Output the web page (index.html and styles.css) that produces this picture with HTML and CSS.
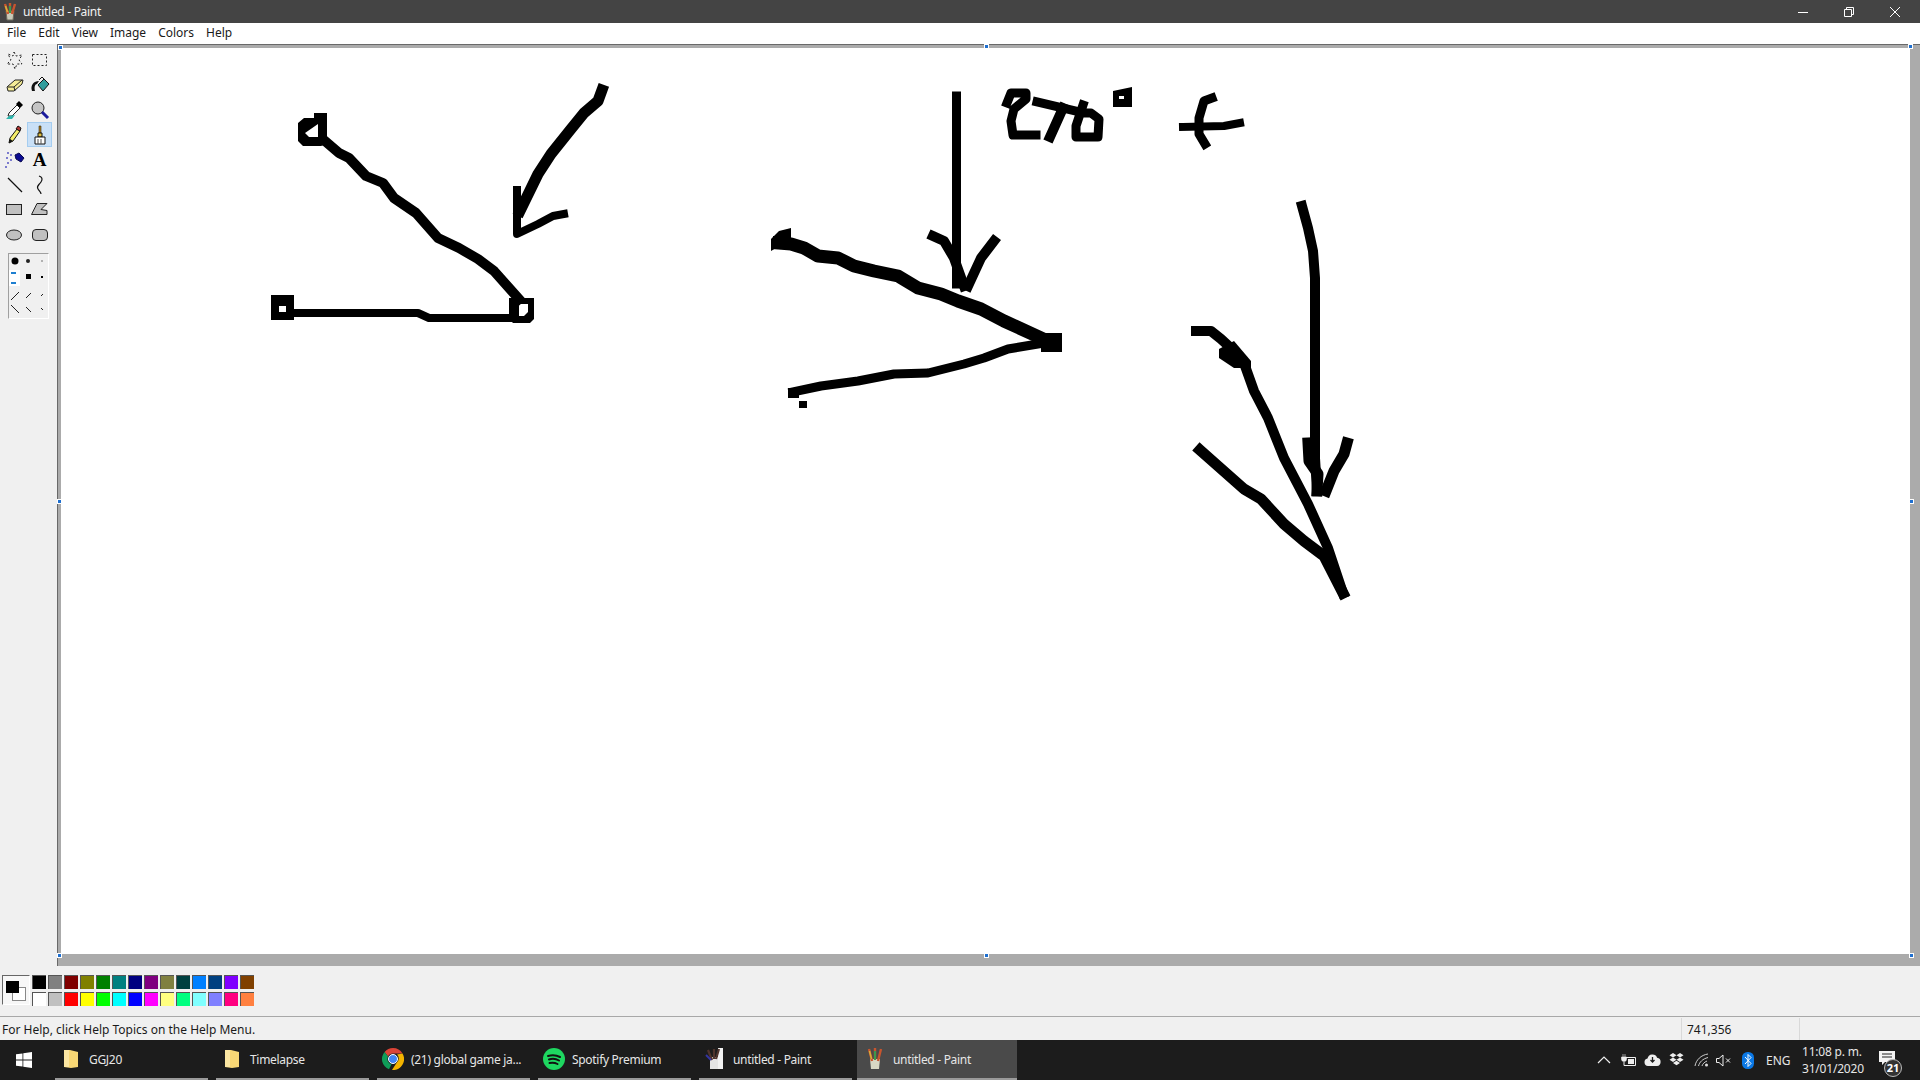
FILE: index.html
```html
<!DOCTYPE html>
<html lang="en">
<head>
    <meta charset="UTF-8">
    <title>untitled - Paint</title>
    <link rel="stylesheet" href="styles.css">
</head>
<body>
    <!-- title bar -->
    <header class="titlebar">
        <svg class="app-icon" width="16" height="18" viewBox="0 0 16 18">
            <path d="M4 8h8l-1 9H5z" fill="#c9c9b8" stroke="#6b6b5c"/>
            <path d="M3 1l3 10M8 0v10M13 1l-3 10" stroke-width="2.4" fill="none" stroke="#c8552e"/>
            <path d="M8 3v7" stroke="#3c9a4a" stroke-width="2"/>
            <path d="M3.5 3l2 6" stroke="#d8b13a" stroke-width="1.6"/>
        </svg>
        <span class="title-text">untitled - Paint</span>
        <div class="window-btns">
            <span class="window-btn"><svg width="12" height="12" viewBox="0 0 12 12"><path d="M1 6.5h10" stroke="#fff"/></svg></span>
            <span class="window-btn"><svg width="12" height="12" viewBox="0 0 12 12"><path d="M1.5 3.5h7v7h-7zM3.5 3.5v-2h7v7h-2" fill="none" stroke="#fff"/></svg></span>
            <span class="window-btn"><svg width="12" height="12" viewBox="0 0 12 12"><path d="M1 1l10 10M11 1L1 11" stroke="#fff"/></svg></span>
        </div>
    </header>

    <!-- menu -->
    <nav class="menubar">
        <span>File</span>
        <span>Edit</span>
        <span>View</span>
        <span>Image</span>
        <span>Colors</span>
        <span>Help</span>
    </nav>

    <main class="main">
        <!-- tools -->
        <aside class="toolbox">
            <div class="tools">
                <span class="tool"><svg width="20" height="20" viewBox="0 0 20 20"><path d="M9 2l2 4 6-1-3 5 3 4-5 0-2 5-2-5-6 0 4-4-3-6 5 2z" fill="none" stroke="#222" stroke-dasharray="2 2"/></svg></span>
                <span class="tool"><svg width="20" height="20" viewBox="0 0 20 20"><rect x="2.5" y="4.500" width="14" height="11" fill="none" stroke="#222" stroke-dasharray="2 2"/></svg></span>
                <span class="tool"><svg width="20" height="20" viewBox="0 0 20 20"><path d="M2 12l8-7h8l-1 4-8 7H3z" fill="#f4ec96" stroke="#222"/><path d="M3 12h6l1 4M9 12l8-7" fill="none" stroke="#222"/></svg></span>
                <span class="tool"><svg width="20" height="20" viewBox="0 0 20 20"><path d="M8 10l6-6 5 5-6 7z" fill="#2f9c9c" stroke="#111"/><path d="M2 16c-2-6 2-10 7-10l-2 3c-2 0-3 3-2 7z" fill="#111"/><path d="M9 5l3-3 3 3" fill="none" stroke="#111"/></svg></span>
                <span class="tool"><svg width="20" height="20" viewBox="0 0 20 20"><path d="M3 16l1-3 8-8 3 3-8 8z" fill="#fff" stroke="#222"/><path d="M11 4l3-3 4 4-3 3z" fill="#000"/><path d="M1 19l3-3 6-1-3 4z" fill="#2fb5ad"/></svg></span>
                <span class="tool"><svg width="20" height="20" viewBox="0 0 20 20"><circle cx="8" cy="8" r="6" fill="#c4c4c4" stroke="#222"/><path d="M12 12l6 6" stroke="#1a1a9c" stroke-width="3"/></svg></span>
                <span class="tool"><svg width="20" height="20" viewBox="0 0 20 20"><path d="M4 18l1-5 7-9 3 2-7 10z" fill="#f4ec6a" stroke="#111"/><path d="M11 4l2-3 3 2-1 3z" fill="#b5332f" stroke="#111"/><path d="M4 18l1-4 3 2z" fill="#111"/></svg></span>
                <span class="tool tool-active"><svg width="20" height="20" viewBox="0 0 20 20"><path d="M9 1h2v7H9z" fill="#a87a20" stroke="#3b2b0a" stroke-width=".6"/><path d="M8 8h4v4H8z" fill="#e0c040" stroke="#111"/><path d="M5 12h10v7H5z" fill="#fff" stroke="#111"/><path d="M8 14v5M11 14v5" stroke="#555"/></svg></span>
                <span class="tool"><svg width="20" height="20" viewBox="0 0 20 20"><path d="M10 5l4-2 5 5-3 4-5-3z" fill="#0a0a90" stroke="#0a0a50"/><path d="M3 2v2M6 4v2M2 7v2M6 9v2M3 12v2M1 16v2" stroke="#4a4ac0" stroke-width="1.400"/></svg></span>
                <span class="tool tool-letter">A</span>
                <span class="tool"><svg width="20" height="20" viewBox="0 0 20 20"><path d="M3 3l14 14" stroke="#111" stroke-width="1.200"/></svg></span>
                <span class="tool"><svg width="20" height="20" viewBox="0 0 20 20"><path d="M9 1c3 1 4 3 2 6s-5 4-3 7 3 3 3 5" fill="none" stroke="#111" stroke-width="1.200"/></svg></span>
                <span class="tool"><svg width="20" height="20" viewBox="0 0 20 20"><rect x="1.500" y="4.500" width="15" height="10" fill="#c0c0c0" stroke="#222"/></svg></span>
                <span class="tool"><svg width="20" height="20" viewBox="0 0 20 20"><path d="M7 3.500h10l-6 6 6 1v4H1.500z" fill="#c0c0c0" stroke="#222"/></svg></span>
                <span class="tool"><svg width="20" height="20" viewBox="0 0 20 20"><ellipse cx="9" cy="10" rx="7.500" ry="5" fill="#c0c0c0" stroke="#222"/></svg></span>
                <span class="tool"><svg width="20" height="20" viewBox="0 0 20 20"><rect x="2.500" y="4.500" width="15" height="11" rx="3.500" fill="#c0c0c0" stroke="#222"/></svg></span>
            </div>
            <div class="tool-options">
                <svg width="39" height="64" viewBox="0 0 39 64">
                    <circle cx="6" cy="7" r="3.500" fill="#000"/>
                    <circle cx="19" cy="7" r="2" fill="#222"/>
                    <circle cx="33" cy="7" r=".7" fill="#444"/>
                    <rect y="16" width="11" height="16" fill="#fff"/>
                    <path d="M2 19h5M2 29h5" stroke="#1e7fd0" stroke-width="2"/>
                    <rect x="17" y="20" width="5" height="5" fill="#000"/>
                    <rect x="32" y="22" width="2" height="2" fill="#000"/>
                    <path d="M2 46l8-8M17 44l5-5M32 42l2-2M2 51l8 8M17 53l5 5M32 54l2 2" stroke="#222"/>
                </svg>
            </div>
        </aside>

        <!-- drawing area -->
        <section class="workspace">
            <div class="canvas">
                <svg class="drawing" width="1849" height="907" viewBox="60 47 1849 907">
                    <!-- left angle -->
                    <path class="solid" fill-rule="evenodd" d="M313 112H326V143L320 145H302L297 140V122L303 117H313ZM317 123L304 132 308 136H317Z"/>
                    <path class="ink w10" d="M324 140L338 152 348 157 365 175 382 182 393 197 415 212 437 237 458 247 477 258 493 270 518 298"/>
                    <path class="solid" fill-rule="evenodd" d="M508 297H533V318L529 322H512L508 318ZM518 303V315H523L527 311V303Z"/>
                    <path class="solid" fill-rule="evenodd" d="M270 294H293V319H270ZM278 305V311H285V305Z"/>
                    <path class="ink w8" d="M293 312H417L428 317H510"/>
                    <path class="ink w11" d="M601 89L597 100 583 112 570 128 550 153 537 173 519 210"/>
                    <path class="ink w8" d="M516 189V233L537 223 552 215 563 213"/>

                    <!-- middle angle -->
                    <path class="ink w9" d="M955.500 95V283"/>
                    <path class="ink w10" d="M932 235L943 240 953 257 963 285"/>
                    <path class="ink w10" d="M993 240L980 257 967 285"/>
                    <path class="solid" d="M770 238L778 230 790 227V238L770 250Z"/>
                    <path class="ink w13" d="M778 242L790 243 803 247 817 255 837 257 853 265 873 270 897 275 917 287 940 293 957 300 980 308 1003 320 1040 337"/>
                    <rect class="solid" x="1040" y="332" width="21" height="19"/>
                    <path class="ink w9" d="M792 391L820 385 857 380 893 373 927 372 963 363 983 357 1007 348 1043 342"/>
                    <rect class="solid" x="787" y="387" width="11" height="10"/>
                    <rect class="solid" x="798" y="400" width="8" height="7"/>

                    <!-- 270 degrees f -->
                    <path class="ink w9" d="M1006 102L1010 92 1025 92V98L1013 108 1010 120 1012 134H1035"/>
                    <path class="ink w9" d="M1036 101L1075 110"/>
                    <path class="ink w10" d="M1062 107L1049 136"/>
                    <path class="ink w9" d="M1082 104L1075 125V136H1097L1098 118 1090 112H1080"/>
                    <path class="solid" fill-rule="evenodd" d="M1112 90L1131 86V106H1112ZM1118 95V98H1123V95Z"/>
                    <path class="ink w9" d="M1211 97L1203 100 1198 117V133L1204 143"/>
                    <path class="ink w8" d="M1182 126L1223 125 1239 122"/>

                    <!-- right angle -->
                    <path class="ink w10" d="M1301 205L1307 227 1312 250 1314 277V457L1316 490"/>
                    <path class="ink w11" d="M1307 442L1308 460 1317 473 1316 490"/>
                    <path class="ink w11" d="M1346 442L1343 453 1333 470 1325 490"/>
                    <path class="ink w10" d="M1195 330H1210L1220 338 1233 350 1243 362 1253 390 1267 417 1283 457 1307 503 1327 547 1342 592"/>
                    <path class="solid" d="M1218 348L1233 340 1250 360V367H1233L1218 357Z"/>
                    <path class="ink w11" d="M1199 449L1217 465 1243 488 1260 498 1283 523 1303 540 1323 555 1342 592"/>
                </svg>
            </div>
            <span class="handle handle-tl"></span>
            <span class="handle handle-t"></span>
            <span class="handle handle-tr"></span>
            <span class="handle handle-l"></span>
            <span class="handle handle-r"></span>
            <span class="handle handle-bl"></span>
            <span class="handle handle-b"></span>
            <span class="handle handle-br"></span>
        </section>
    </main>

    <!-- colours -->
    <div class="palette">
        <div class="current-colors">
            <span class="color-back"></span>
            <span class="color-front"></span>
        </div>
        <div class="swatches">
            <span></span><span></span><span></span><span></span><span></span><span></span><span></span>
            <span></span><span></span><span></span><span></span><span></span><span></span><span></span>
            <span></span><span></span><span></span><span></span><span></span><span></span><span></span>
            <span></span><span></span><span></span><span></span><span></span><span></span><span></span>
        </div>
    </div>

    <!-- status bar -->
    <div class="statusbar">
        <span class="status-help">For Help, click Help Topics on the Help Menu.</span>
        <span class="status-pos">741,356</span>
        <span class="status-size"></span>
    </div>

    <!-- windows taskbar -->
    <footer class="taskbar">
        <div class="start">
            <svg width="16" height="16" viewBox="0 0 16 16"><path d="M0 2.300l6.500-.9v6.200H0zM7.300 1.300L16 0v7.600H7.300zM0 8.400h6.500v6.200L0 13.700zM7.300 8.400H16V16l-8.700-1.300z" fill="#fff"/></svg>
        </div>
        <div class="task">
            <span class="task-icon"><svg width="16" height="20" viewBox="0 0 16 20"><path d="M1 1h6l8 2v15l-7 1-7-1z" fill="#f8d775"/><path d="M1 1h5v17H1z" fill="#fbe6a2"/></svg></span>
            <span>GGJ20</span>
        </div>
        <div class="task">
            <span class="task-icon"><svg width="16" height="20" viewBox="0 0 16 20"><path d="M1 1h6l8 2v15l-7 1-7-1z" fill="#f8d775"/><path d="M1 1h5v17H1z" fill="#fbe6a2"/></svg></span>
            <span>Timelapse</span>
        </div>
        <div class="task">
            <span class="task-icon"><svg width="22" height="22" viewBox="0 0 22 22"><path d="M11 0a11 11 0 0 1 9.500 5.500H11a5.500 5.500 0 0 0-5 3L2.600 3.900A11 11 0 0 1 11 0z" fill="#db4437"/><path d="M2.600 3.900L6 8.500a5.500 5.500 0 0 0 3.500 7.800L7 21.300A11 11 0 0 1 2.600 3.900z" fill="#0f9d58"/><path d="M20.500 5.500A11 11 0 0 1 10 22l4.500-7a5.500 5.500 0 0 0 .5-8.500z" fill="#f4b400"/><circle cx="11" cy="11" r="4.500" fill="#4285f4" stroke="#fff"/></svg></span>
            <span>(21) global game ja...</span>
        </div>
        <div class="task">
            <span class="task-icon"><svg width="22" height="22" viewBox="0 0 22 22"><circle cx="11" cy="11" r="11" fill="#1ed760"/><path d="M5 8c4-1 8-1 12 1M6 11.500c3-1 7-.7 10 1M6.500 15c3-.7 5.500-.4 8 1" fill="none" stroke="#111" stroke-width="2" stroke-linecap="round"/></svg></span>
            <span>Spotify Premium</span>
        </div>
        <div class="task">
            <span class="task-icon"><svg width="20" height="22" viewBox="0 0 20 22"><path d="M5 9h12v12H5z" fill="#e4e4e4"/><path d="M13 0h5v21h-5z" fill="#f2f2f2"/><path d="M3 2l4 10M9 1v10M14 1l-3 10" stroke-width="2.200" stroke="#50342c" fill="none"/><path d="M1 7l5 5" stroke="#3535a0" stroke-width="2"/></svg></span>
            <span>untitled - Paint</span>
        </div>
        <div class="task task-active">
            <span class="task-icon"><svg width="18" height="22" viewBox="0 0 18 22"><path d="M4 11h10l-1 10H5z" fill="#d8d8c4"/><path d="M3 1l3 12M9 0v12M15 1l-3 12" stroke-width="2.400" fill="none" stroke="#c8552e"/><path d="M9 3v9" stroke="#3c9a4a" stroke-width="2"/><path d="M3.500 3l2 8" stroke="#d8b13a" stroke-width="1.600"/></svg></span>
            <span>untitled - Paint</span>
        </div>

        <div class="tray">
            <svg class="tray-chevron" width="14" height="8" viewBox="0 0 14 8"><path d="M1 7l6-6 6 6" fill="none" stroke="#eee" stroke-width="1.200"/></svg>
            <svg class="tray-battery" width="16" height="12" viewBox="0 0 16 12"><path d="M3 0v3M5 0v3M1.500 3h5v2a2.500 2.500 0 0 1-5 0z" fill="#eee" stroke="#eee" stroke-width=".6"/><path d="M6 3.500h9.500v8H4V8" fill="none" stroke="#eee"/><rect x="8" y="5" width="6" height="5" fill="#eee"/></svg>
            <svg class="tray-cloud" width="17" height="12" viewBox="0 0 17 12"><path d="M4 12a3.800 3.800 0 0 1-.5-7.500 5 5 0 0 1 9.600-.8A4.200 4.200 0 0 1 13 12z" fill="#eee"/><path d="M8.500 3v5M6.500 6l2 2 2-2" fill="none" stroke="#1c1c1c" stroke-width="1.300"/></svg>
            <svg class="tray-dropbox" width="15" height="14" viewBox="0 0 15 14"><path d="M4 0l3.500 2.200L4 4.500.5 2.200zM11 0l3.500 2.200L11 4.500 7.500 2.200zM4 4.500l3.500 2.300L4 9 .5 6.800zM11 4.500l3.500 2.300L11 9 7.500 6.800zM4 10l3.500-2.200L11 10l-3.500 2.300z" fill="#eee"/></svg>
            <svg class="tray-wifi" width="15" height="14" viewBox="0 0 15 14"><path d="M1 13C2 7 7 2 14 1M4.500 13c1-4 4-7 9.500-8.500M8 13c.5-2 2.500-4 5-5" fill="none" stroke="#ccc"/><circle cx="12.500" cy="12" r="1.500" fill="#ddd"/></svg>
            <svg class="tray-sound" width="15" height="13" viewBox="0 0 15 13"><path d="M.5 4.500h2.500L7 1v11L3 8.500H.5z" fill="none" stroke="#eee"/><path d="M10 4.500l4 4M14 4.500l-4 4" stroke="#eee"/></svg>
            <svg class="tray-bluetooth" width="12" height="17" viewBox="0 0 12 17"><rect width="12" height="17" rx="5.500" fill="#0a78e6"/><path d="M3 5l6 6.500-3 3v-12l3 3L3 12" fill="none" stroke="#fff"/></svg>
            <span class="tray-lang">ENG</span>
            <div class="tray-clock">
                <span>11:08 p. m.</span>
                <span>31/01/2020</span>
            </div>
            <div class="tray-notify">
                <svg width="16" height="14" viewBox="0 0 16 14"><path d="M0 0h16v11H6l-3 3v-3H0z" fill="#f4f4f4"/><path d="M3 3h10M3 6h10" stroke="#222"/></svg>
                <span class="notify-badge">21</span>
            </div>
        </div>
    </footer>
</body>
</html>
```

FILE: styles.css
```css
* {
    margin: 0;
    padding: 0;
    box-sizing: border-box;
}

body {
    width: 1920px;
    height: 1080px;
    overflow: hidden;
    display: flex;
    flex-direction: column;
    font-family: "Noto Sans", "Open Sans", sans-serif;
    font-size: 12px;
    background-color: #f0f0f0;
    color: #1a1a1a;
}

/* title bar */
.titlebar {
    height: 23px;
    flex-shrink: 0;
    display: flex;
    align-items: center;
    background-color: #444444;
    color: #f2f2f2;
}

.app-icon {
    margin-left: 2px;
    margin-right: 5px;
}

.title-text {
    letter-spacing: -0.3px;
}

.window-btns {
    margin-left: auto;
    padding-right: 2px;
    display: flex;
}

.window-btn {
    width: 46px;
    display: flex;
    justify-content: center;
    align-items: center;
}

/* menu */
.menubar {
    height: 21px;
    flex-shrink: 0;
    display: flex;
    align-items: center;
    gap: 12px;
    padding-left: 7px;
    padding-bottom: 2px;
    background-color: #ffffff;
}

/* main area */
.main {
    flex: 1;
    display: flex;
    min-height: 0;
}

.toolbox {
    width: 57px;
    flex-shrink: 0;
    padding: 3px 0 0 2px;
    background-color: #f0f0f0;
}

.tools {
    display: grid;
    grid-template-columns: repeat(2, 25px);
    grid-auto-rows: 25px;
}

.tool {
    display: flex;
    justify-content: center;
    align-items: center;
}

.tool-active {
    background-color: #c9e0f7;
    border: 1px solid #a5cdf0;
}

.tool-letter {
    font-family: "Liberation Serif", serif;
    font-weight: bold;
    font-size: 19px;
    color: #000;
}

.tool-options {
    width: 41px;
    height: 66px;
    margin: 6px 0 0 6px;
    border: 1px solid #a0a0a0;
    border-right-color: #fff;
    border-bottom-color: #fff;
}

.tool-options svg {
    display: block;
}

/* drawing area */
.workspace {
    flex: 1;
    position: relative;
    padding: 3px 11px 12px 3px;
    background-color: #ababab;
    border-top: 1px solid #696969;
    border-left: 1px solid #696969;
}

.canvas {
    width: 100%;
    height: 100%;
    background-color: #ffffff;
}

.drawing {
    display: block;
}

.ink {
    fill: none;
    stroke: #000;
    stroke-linejoin: round;
    stroke-linecap: square;
}

.solid {
    fill: #000;
}

.w8 { stroke-width: 8; }
.w9 { stroke-width: 9; }
.w10 { stroke-width: 10; }
.w11 { stroke-width: 11; }
.w13 { stroke-width: 13; }

.handle {
    position: absolute;
    width: 3px;
    height: 3px;
    background-color: #1e6fd0;
    outline: 1px solid #fff;
}

.handle-tl { left: 1px; top: 1px; }
.handle-t { left: 927px; top: 0; }
.handle-tr { left: 1851px; top: 0; }
.handle-l { left: 0; top: 455px; }
.handle-r { left: 1852px; top: 455px; }
.handle-bl { left: 0; top: 909px; }
.handle-b { left: 927px; top: 909px; }
.handle-br { left: 1852px; top: 909px; }

/* colours */
.palette {
    height: 50px;
    flex-shrink: 0;
    display: flex;
    padding: 9px 0 0 2px;
    background-color: #f0f0f0;
}

.current-colors {
    position: relative;
    width: 28px;
    height: 30px;
    background-color: #f7f7f7;
    border: 1px solid #666;
    border-right-color: #fff;
    border-bottom-color: #fff;
}

.color-back {
    position: absolute;
    left: 9px;
    top: 11px;
    width: 14px;
    height: 14px;
    background-color: #fff;
    border: 1px solid #888;
}

.color-front {
    position: absolute;
    left: 3px;
    top: 5px;
    width: 13px;
    height: 12px;
    background-color: #000;
}

.swatches {
    margin-left: 2px;
    display: grid;
    grid-template-columns: repeat(14, 14px);
    grid-auto-rows: 14px;
    gap: 3px 2px;
}

.swatches span {
    border-top: 1px solid #555;
    border-left: 1px solid #555;
}

.swatches span:nth-child(1) { background-color: #000000; }
.swatches span:nth-child(2) { background-color: #808080; }
.swatches span:nth-child(3) { background-color: #800000; }
.swatches span:nth-child(4) { background-color: #808000; }
.swatches span:nth-child(5) { background-color: #008000; }
.swatches span:nth-child(6) { background-color: #008080; }
.swatches span:nth-child(7) { background-color: #000080; }
.swatches span:nth-child(8) { background-color: #800080; }
.swatches span:nth-child(9) { background-color: #808040; }
.swatches span:nth-child(10) { background-color: #004040; }
.swatches span:nth-child(11) { background-color: #0080ff; }
.swatches span:nth-child(12) { background-color: #004080; }
.swatches span:nth-child(13) { background-color: #8000ff; }
.swatches span:nth-child(14) { background-color: #804000; }
.swatches span:nth-child(15) { background-color: #ffffff; }
.swatches span:nth-child(16) { background-color: #c0c0c0; }
.swatches span:nth-child(17) { background-color: #ff0000; }
.swatches span:nth-child(18) { background-color: #ffff00; }
.swatches span:nth-child(19) { background-color: #00ff00; }
.swatches span:nth-child(20) { background-color: #00ffff; }
.swatches span:nth-child(21) { background-color: #0000ff; }
.swatches span:nth-child(22) { background-color: #ff00ff; }
.swatches span:nth-child(23) { background-color: #ffff80; }
.swatches span:nth-child(24) { background-color: #00ff80; }
.swatches span:nth-child(25) { background-color: #80ffff; }
.swatches span:nth-child(26) { background-color: #8080ff; }
.swatches span:nth-child(27) { background-color: #ff0080; }
.swatches span:nth-child(28) { background-color: #ff8040; }

/* status bar */
.statusbar {
    height: 24px;
    flex-shrink: 0;
    display: flex;
    align-items: center;
    padding-top: 1px;
    border-top: 1px solid #a8a8a8;
    background-color: #f0f0f0;
}

.status-help {
    width: 1681px;
    padding-left: 2px;
}

.status-pos {
    width: 119px;
    height: 100%;
    padding-left: 5px;
    display: flex;
    align-items: center;
    border-left: 1px solid #d9d9d9;
    border-right: 1px solid #d9d9d9;
}

/* taskbar */
.taskbar {
    height: 40px;
    flex-shrink: 0;
    display: flex;
    align-items: stretch;
    background-color: #1c1c1c;
    color: #e6e6e6;
}

.start {
    width: 47px;
    padding-left: 16px;
    margin-right: 8px;
    display: flex;
    align-items: center;
}

.task {
    width: 153px;
    margin-right: 8px;
    padding-left: 4px;
    display: flex;
    align-items: center;
    gap: 6px;
    letter-spacing: -0.3px;
    border-bottom: 2px solid #9a9a9a;
}

.task-icon {
    width: 24px;
    display: flex;
    justify-content: center;
    align-items: center;
}

.task-active {
    width: 160px;
    margin-left: -3px;
    padding-left: 6px;
    margin-right: 0;
    background-color: #4a4a4a;
}

.tray {
    margin-left: auto;
    display: flex;
    align-items: center;
}

.tray-chevron { margin-right: 9px; }
.tray-battery { margin-right: 8px; }
.tray-cloud { margin-right: 8px; }
.tray-dropbox { margin-right: 10px; }
.tray-wifi { margin-right: 7px; }
.tray-sound { margin-right: 11px; }
.tray-bluetooth { margin-right: 12px; }

.tray-lang {
    width: 36px;
}

.tray-clock {
    width: 60px;
    display: flex;
    flex-direction: column;
    align-items: flex-start;
    line-height: 17px;
    white-space: nowrap;
    letter-spacing: -0.2px;
    margin-right: 17px;
}

.tray-notify {
    position: relative;
    width: 41px;
    height: 100%;
    display: flex;
    align-items: center;
    padding-bottom: 4px;
}

.notify-badge {
    position: absolute;
    left: 5px;
    top: 19px;
    width: 18px;
    height: 18px;
    border: 1px solid #bbb;
    border-radius: 50%;
    background-color: #333;
    color: #fff;
    font-size: 11px;
    font-weight: bold;
    line-height: 16px;
    text-align: center;
}
```
